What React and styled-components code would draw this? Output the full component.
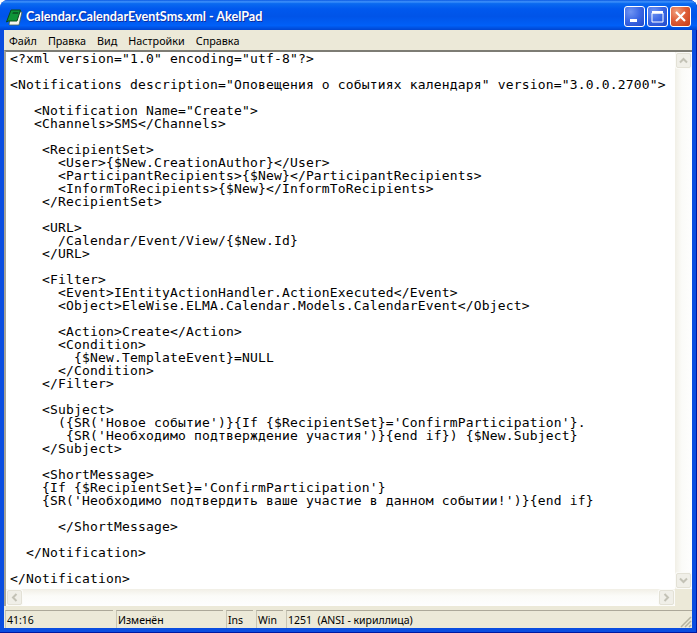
import React from "react";
import styled, { createGlobalStyle } from "styled-components";

const Global = createGlobalStyle`
  html, body { margin: 0; padding: 0; background: #fff; }
  body { width: 697px; height: 633px; overflow: hidden; }
`;

const Win = styled.div`
  width: 697px;
  height: 633px;
  display: flex;
  flex-direction: column;
  border-radius: 8px 8px 0 0;
  overflow: hidden;
  background: #0a4de0;
  box-shadow: inset 0 -1px 0 #0018a0, inset -1px 0 0 #0018a0;
`;

const TitleBar = styled.div`
  height: 30px;
  flex: none;
  display: flex;
  align-items: center;
  padding: 2px 6px 0 6px;
  box-sizing: border-box;
  background: linear-gradient(180deg, #0a58e2 0%, #3f92fb 6%, #0a6af0 12%, #0058ee 30%, #0054e8 55%, #0060f8 85%, #0045d0 100%);
`;

const AppIcon = styled.svg`
  width: 17px;
  height: 17px;
  flex: none;
  margin: 2px 3px 0 0;
`;

const Title = styled.div`
  flex: 1;
  color: #fff;
  padding-top: 1px;
  font: bold 12.6px Lato, "Noto Sans", sans-serif;
  text-shadow: 1px 1px 0 #0f2fa0;
  white-space: nowrap;
`;

const Controls = styled.div`
  display: flex;
  gap: 2px;
`;

const CtlButton = styled.div`
  width: 21px;
  height: 21px;
  box-sizing: border-box;
  border: 1px solid #fff;
  border-radius: 3px;
  display: flex;
  align-items: center;
  justify-content: center;
  background: ${(p) =>
    p.$close
      ? "radial-gradient(circle at 30% 25%, #f0a080 0%, #e0603a 45%, #c43a16 100%)"
      : "radial-gradient(circle at 30% 25%, #6f94f2 0%, #3a66e4 50%, #2048c8 100%)"};
`;

const Frame = styled.div`
  flex: 1;
  min-height: 0;
  display: flex;
  flex-direction: column;
  margin: 0 5px 5px 4px;
  background: #ece9d8;
`;

const MenuBar = styled.div`
  height: 20px;
  flex: none;
  display: flex;
  align-items: center;
  padding-left: 5px;
  gap: 11px;
  font: 10.8px "Noto Sans", sans-serif;
  color: #000;
`;

const MenuItem = styled.span`
  white-space: nowrap;
`;

const EditorFrame = styled.div`
  flex: 1;
  min-height: 0;
  display: grid;
  grid-template-columns: 1fr 17px;
  grid-template-rows: 1fr 17px;
  border-top: 2px solid #7d7c74;
  border-left: 2px solid #a6a498;
`;

const Code = styled.pre`
  margin: 0;
  padding: 0 0 0 4px;
  background: #fff;
  overflow: hidden;
  color: #000;
  font: 13px/13px "DejaVu Sans Mono", monospace;
  letter-spacing: 0.17px;
`;

const VTrack = styled.div`
  background: linear-gradient(90deg, #f1efe6 0%, #fbfbf8 40%, #fefefe 100%);
  display: flex;
  flex-direction: column;
  justify-content: space-between;
  align-items: center;
`;

const HTrack = styled.div`
  background: linear-gradient(180deg, #f1efe6 0%, #fbfbf8 40%, #fefefe 100%);
  display: flex;
  justify-content: space-between;
  align-items: center;
`;

const ScrollBtn = styled.div`
  width: 15px;
  height: 15px;
  margin: 1px;
  box-sizing: border-box;
  border: 1px solid #e3e1d6;
  border-radius: 2px;
  background: #f0efe8;
  box-shadow: 0 0 0 1px #fbfbf8;
  display: flex;
  align-items: center;
  justify-content: center;
`;

const Corner = styled.div`
  background: #ece9d8;
`;

const StatusBar = styled.div`
  height: 22px;
  flex: none;
  display: flex;
  gap: 3px;
  padding: 4px 0 0 1px;
  box-sizing: border-box;
  position: relative;
  font: 10.5px "Noto Sans", sans-serif;
  color: #000;
`;

const Pane = styled.div`
  width: ${(p) => p.$w}px;
  flex: ${(p) => (p.$w ? "none" : "1")};
  box-sizing: border-box;
  border-top: 1px solid #aca899;
  border-left: 1px solid #c8c5b4;
  display: flex;
  align-items: center;
  padding-left: 1px;
  white-space: pre;
`;

const Grip = styled.svg`
  position: absolute;
  right: 0;
  bottom: 0;
  width: 13px;
  height: 13px;
`;

const code = `<?xml version="1.0" encoding="utf-8"?>

<Notifications description="Оповещения о событиях календаря" version="3.0.0.2700">

   <Notification Name="Create">
   <Channels>SMS</Channels>

    <RecipientSet>
      <User>{$New.CreationAuthor}</User>
      <ParticipantRecipients>{$New}</ParticipantRecipients>
      <InformToRecipients>{$New}</InformToRecipients>
    </RecipientSet>

    <URL>
      /Calendar/Event/View/{$New.Id}
    </URL>

    <Filter>
      <Event>IEntityActionHandler.ActionExecuted</Event>
      <Object>EleWise.ELMA.Calendar.Models.CalendarEvent</Object>

      <Action>Create</Action>
      <Condition>
        {$New.TemplateEvent}=NULL
      </Condition>
    </Filter>

    <Subject>
      ({SR('Новое событие')}{If {$RecipientSet}='ConfirmParticipation'}.
       {SR('Необходимо подтверждение участия')}{end if}) {$New.Subject}
    </Subject>

    <ShortMessage>
    {If {$RecipientSet}='ConfirmParticipation'}
    {SR('Необходимо подтвердить ваше участие в данном событии!')}{end if}

      </ShortMessage>

  </Notification>

</Notification>`;

const Arrow = ({ d }) => (
  <svg width="9" height="9" viewBox="0 0 9 9">
    <path d={d} fill="none" stroke="#c3c2b6" strokeWidth="2" />
  </svg>
);

export default function App() {
  return (
    <>
      <Global />
      <Win>
        <TitleBar>
          <AppIcon viewBox="0 0 17 17">
            <path d="M5 3 H16 L13 16 H3 Z" fill="#f6f6ee" stroke="#46604c" strokeWidth="0.8" />
            <path d="M0.5 13 L5 1 H14.5 L11 12 H2.5 Z" fill="#0f9438" stroke="#0a4a1c" strokeWidth="1" />
            <path d="M7 3 H12.5 L12 5 H6.3 Z" fill="#0a5e26" />
          </AppIcon>
          <Title>Calendar.CalendarEventSms.xml - AkelPad</Title>
          <Controls>
            <CtlButton>
              <svg width="13" height="13" viewBox="0 0 13 13">
                <rect x="2" y="9" width="7" height="3" fill="#fff" />
              </svg>
            </CtlButton>
            <CtlButton>
              <svg width="13" height="13" viewBox="0 0 13 13">
                <path d="M1 3 H12 V12 H1 Z" fill="none" stroke="#fff" />
                <rect x="1" y="1" width="11" height="2.5" fill="#fff" />
              </svg>
            </CtlButton>
            <CtlButton $close>
              <svg width="13" height="13" viewBox="0 0 13 13">
                <path d="M2 2 L11 11 M11 2 L2 11" stroke="#fff" strokeWidth="2.2" />
              </svg>
            </CtlButton>
          </Controls>
        </TitleBar>
        <Frame>
          <MenuBar>
            <MenuItem>Файл</MenuItem>
            <MenuItem>Правка</MenuItem>
            <MenuItem>Вид</MenuItem>
            <MenuItem>Настройки</MenuItem>
            <MenuItem>Справка</MenuItem>
          </MenuBar>
          <EditorFrame>
            <Code>{code}</Code>
            <VTrack>
              <ScrollBtn><Arrow d="M1 6.5 L4.5 3 L8 6.5" /></ScrollBtn>
              <ScrollBtn><Arrow d="M1 2.5 L4.5 6 L8 2.5" /></ScrollBtn>
            </VTrack>
            <HTrack>
              <ScrollBtn><Arrow d="M6.5 1 L3 4.5 L6.5 8" /></ScrollBtn>
              <ScrollBtn><Arrow d="M2.5 1 L6 4.5 L2.5 8" /></ScrollBtn>
            </HTrack>
            <Corner />
          </EditorFrame>
          <StatusBar>
            <Pane $w={108}>41:16</Pane>
            <Pane $w={107}>Изменён</Pane>
            <Pane $w={27}>Ins</Pane>
            <Pane $w={27}>Win</Pane>
            <Pane>1251  (ANSI - кириллица)</Pane>
            <Grip viewBox="0 0 13 13">
              <path d="M12 2 L2 12 M12 6 L6 12 M12 10 L10 12" stroke="#b5b2a0" strokeWidth="1.5" />
            </Grip>
          </StatusBar>
        </Frame>
      </Win>
    </>
  );
}
